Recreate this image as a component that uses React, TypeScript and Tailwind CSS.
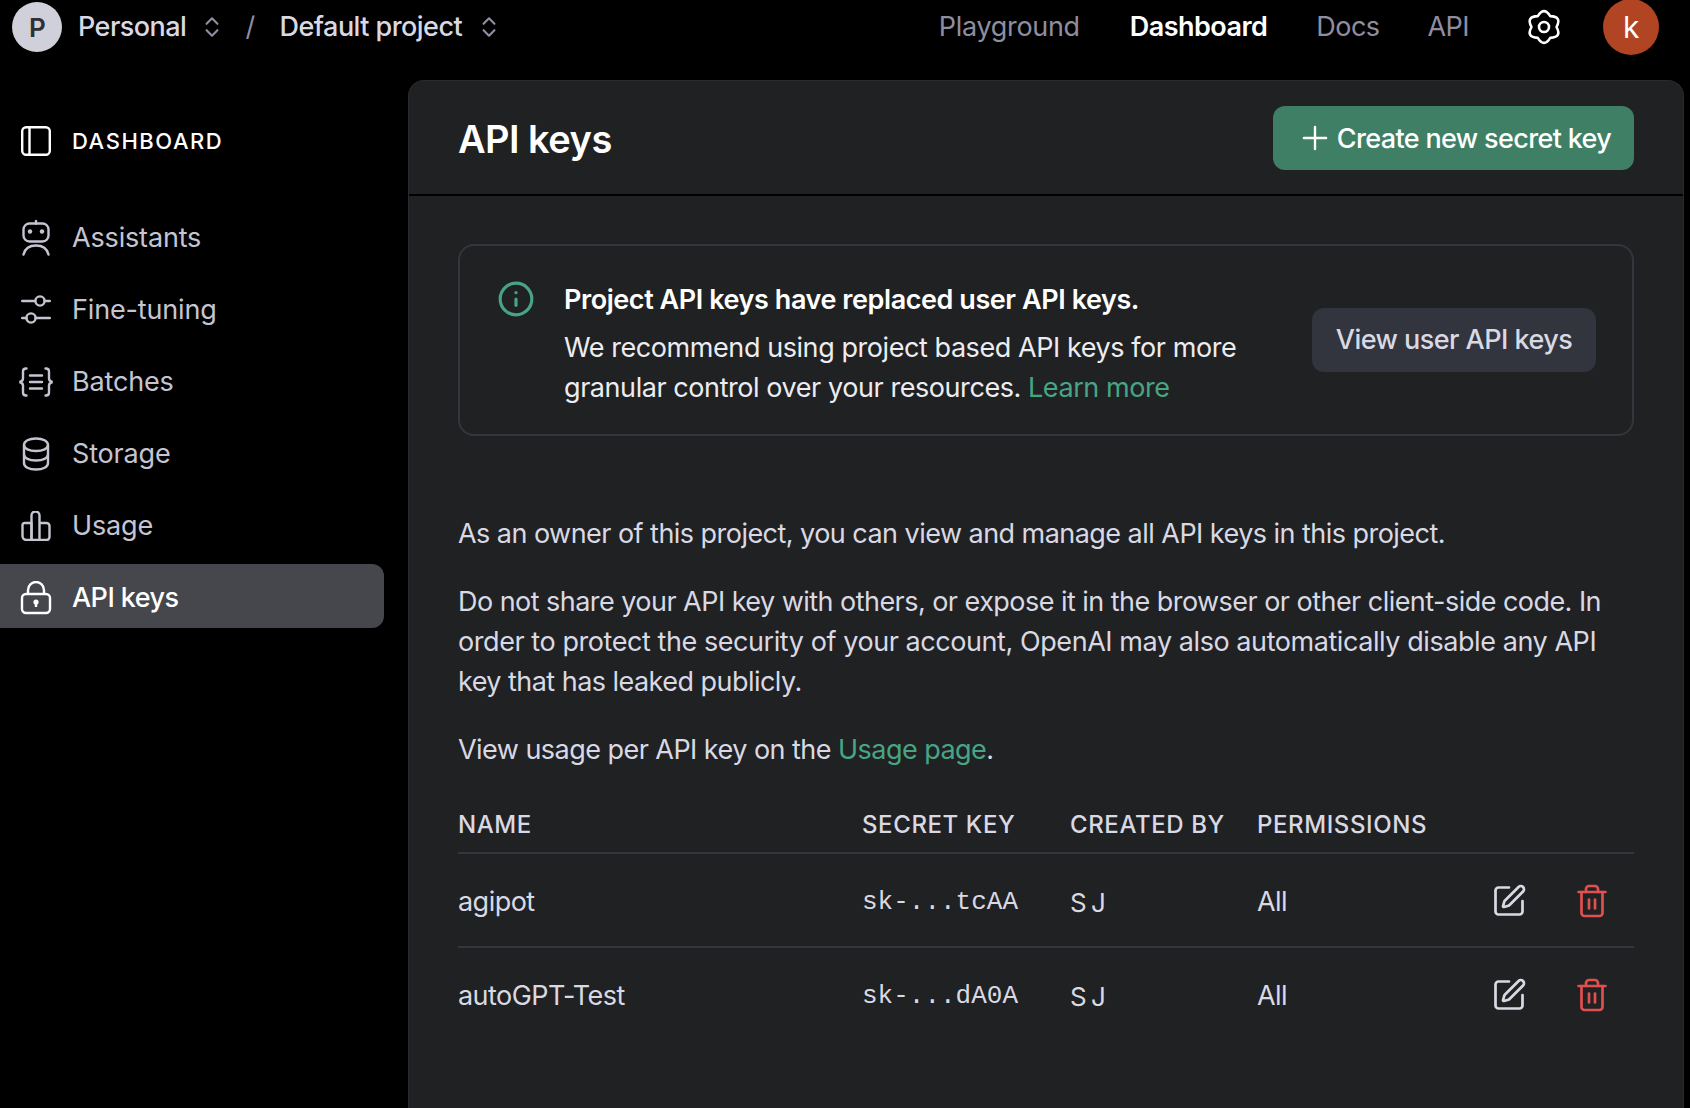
import { ChevronsUpDown, Info, Plus, SquarePen, Trash2 } from "lucide-react";
import type { ReactNode } from "react";

function PanelIcon() {
  return (
    <svg width="30" height="30" viewBox="0 0 30 30" fill="none" stroke="currentColor" strokeWidth="2.4">
      <rect x="1.2" y="1.2" width="27.6" height="27.6" rx="4" />
      <path d="M8.5 1.5v27" />
    </svg>
  );
}

function RobotIcon() {
  return (
    <svg width="28" height="36" viewBox="0 0 28 36" fill="none" stroke="currentColor" strokeWidth="2.4" strokeLinecap="round">
      <rect x="1.5" y="3.5" width="25" height="18" rx="6" />
      <path d="M14 1v2.500" />
      <circle cx="8" cy="11.500" r="2.200" fill="currentColor" stroke="none" />
      <circle cx="20" cy="11.500" r="2.200" fill="currentColor" stroke="none" />
      <path d="M1.500 34.500C3 28.500 8 25.500 14 25.500s11 3 12.500 9" />
    </svg>
  );
}

function SlidersIcon() {
  return (
    <svg width="30" height="30" viewBox="0 0 30 30" fill="none" stroke="currentColor" strokeWidth="2.4" strokeLinecap="round">
      <circle cx="19" cy="6" r="4.600" />
      <path d="M1.200 6h13M23.600 6h5.200" />
      <circle cx="10" cy="23" r="4.600" />
      <path d="M1.200 23h4.200M14.600 23h14.200" />
    </svg>
  );
}

function BracesIcon() {
  return (
    <svg width="36" height="30" viewBox="0 0 36 30" fill="none" stroke="currentColor" strokeWidth="2.4" strokeLinecap="round">
      <path d="M8.500 1.500H8C6 1.500 5 2.500 5 4.500v7c0 2-1.500 3-3.500 3.500C3.500 15.500 5 16.500 5 18.500v7c0 2 1 3 3 3h.5" />
      <path d="M27.500 1.500h.5c2 0 3 1 3 3v7c0 2 1.500 3 3.500 3.500-2 .5-3.500 1.500-3.500 3.500v7c0 2-1 3-3 3h-.5" />
      <path d="M12 8.500h12M12 15h12M12 21.500h12" />
    </svg>
  );
}

function StorageIcon() {
  return (
    <svg width="28" height="34" viewBox="0 0 28 34" fill="none" stroke="currentColor" strokeWidth="2.400">
      <path d="M2 8c0-4 5-6.500 12-6.500S26 4 26 8v18c0 4-5 6.500-12 6.500S2 30 2 26z" />
      <path d="M2 8c0 3.500 5 6 12 6s12-2.500 12-6" />
      <path d="M2 17.500c0 3.500 5 6 12 6s12-2.500 12-6" />
    </svg>
  );
}

function ChartIcon() {
  return (
    <svg width="30" height="30" viewBox="0 0 30 30" fill="none" stroke="currentColor" strokeWidth="2.4" strokeLinejoin="round">
      <path d="M3.500 12h7v17h-5a4 4 0 0 1-4-4v-11a2 2 0 0 1 2-2z" />
      <path d="M10.500 29V4.500a4 4 0 0 1 8 0V29z" />
      <path d="M18.500 12h7a3 3 0 0 1 3 3v11a3 3 0 0 1-3 3h-7" />
    </svg>
  );
}

function LockIcon() {
  return (
    <svg width="32" height="34" viewBox="0 0 32 34" fill="none" stroke="currentColor" strokeWidth="2.400">
      <path d="M8 13V9a8 8 0 0 1 16 0v4" />
      <rect x="2" y="13" width="28" height="19" rx="4" />
      <circle cx="16" cy="21" r="2.600" fill="currentColor" stroke="none" />
      <path d="M16 21v5" />
    </svg>
  );
}

function GearIcon() {
  return (
    <svg width="36" height="36" viewBox="0 0 36 36" fill="none" stroke="currentColor" strokeWidth="2.600" strokeLinejoin="round">
      <path d="M30.500 18Q36.190 7.500 24.250 7.170Q18 -3 11.750 7.170Q-.19 7.500 5.500 18Q-.19 28.500 11.750 28.830Q18 39 24.250 28.830Q36.190 28.500 30.500 18Z" />
      <circle cx="18" cy="18" r="5" />
    </svg>
  );
}

function NavItem({ icon, label, active }: { icon: ReactNode; label: string; active?: boolean }) {
  return (
    <div className={`flex h-16 items-center rounded-r-xl pl-[16px] pt-[4px] ${active ? "bg-[#46464d] font-medium text-white" : "text-[#c5c5d2]"}`}>
      <div className="flex w-[40px] shrink-0 justify-center">{icon}</div>
      <span className={`ml-[16px] ${active ? "" : "tracking-[-0.006em]"}`}>{label}</span>
    </div>
  );
}

const rows = [
  { name: "agipot", key: "sk-...tcAA" },
  { name: "autoGPT-Test", key: "sk-...dA0A" },
];

export default function App() {
  return (
    <div className="flex h-screen flex-col overflow-hidden bg-black font-['Inter',sans-serif] text-[27px] tracking-[-0.02em] text-[#d9d9e3]">
      <header className="flex h-20 shrink-0 pb-[26px] pl-3 pr-[31px]">
        <div className="flex items-center">
          <div className="flex h-[50px] w-[50px] items-center justify-center rounded-full bg-[#d0d0da] text-[26px] font-semibold text-[#2f3033]">P</div>
          <span className="ml-[16px] font-medium">Personal</span>
          <ChevronsUpDown className="ml-[13px] text-[#8e8ea0]" size={26} strokeWidth={2} />
          <span className="ml-[20px] text-[#8e8ea0]">/</span>
          <span className="ml-[25px] font-medium">Default project</span>
          <ChevronsUpDown className="ml-[14px] text-[#8e8ea0]" size={26} strokeWidth={2} />
        </div>
        <nav className="ml-auto flex items-center">
          <span className="tracking-[-0.012em] text-[#8e8ea0]">Playground</span>
          <span className="ml-[50px] font-semibold text-white">Dashboard</span>
          <span className="ml-[49px] text-[#8e8ea0]">Docs</span>
          <span className="ml-[48px] text-[#8e8ea0]">API</span>
          <div className="ml-[57px] text-white">
            <GearIcon />
          </div>
          <div className="ml-[41px] flex h-14 w-14 items-center justify-center rounded-full bg-[#b04423] text-[30px] text-white">k</div>
        </nav>
      </header>

      <div className="flex min-h-0 flex-1">
        <aside className="w-[408px] shrink-0">
          <div className="flex h-[124px] items-center pb-[2px] pl-[21px] text-white">
            <PanelIcon />
            <span className="ml-[21px] text-[22px] font-medium tracking-[0.07em]">DASHBOARD</span>
          </div>
          <div className="flex flex-col gap-2 pr-6">
            <NavItem icon={<RobotIcon />} label="Assistants" />
            <NavItem icon={<SlidersIcon />} label="Fine-tuning" />
            <NavItem icon={<BracesIcon />} label="Batches" />
            <NavItem icon={<StorageIcon />} label="Storage" />
            <NavItem icon={<ChartIcon />} label="Usage" />
            <NavItem icon={<LockIcon />} label="API keys" active />
          </div>
        </aside>

        <main className="mr-[6px] min-w-0 flex-1 rounded-t-2xl border border-b-0 border-[#2a2b30] bg-[#202123]">
          <div className="flex h-[115px] items-center justify-between border-b-2 border-black pl-[49px] pr-[49px]">
            <h1 className="pt-[4px] text-[38px] font-semibold text-white">API keys</h1>
            <button className="flex h-16 w-[361px] items-center justify-center gap-[3px] rounded-xl bg-[#3f7f65] font-medium tracking-[-0.024em] text-white">
              <Plus size={38} strokeWidth={1.500} />
              <span className="pt-[3px]">Create new secret key</span>
            </button>
          </div>

          <div className="pl-[49px] pr-[49px] pt-[48px]">
            <div className="flex h-[192px] items-center rounded-2xl border-2 border-[#35363d] pl-[37px] pr-[36px]">
              <Info className="mb-[82px] shrink-0 text-[#47a584]" size={38} strokeWidth={2} />
              <div className="ml-[29px] mt-[7px] leading-10 tracking-[-0.016em] text-[#ececf1]">
                <div className="mb-2 font-semibold text-white">Project API keys have replaced user API keys.</div>
                <div>We recommend using project based API keys for more</div>
                <div>
                  granular control over your resources. <span className="text-[#47a584]">Learn more</span>
                </div>
              </div>
              <button className="ml-auto flex h-16 w-[284px] items-center justify-center rounded-xl bg-[#32343e] font-medium tracking-[-0.02em]">View user API keys</button>
            </div>

            <div className="mt-[78px] flex flex-col gap-7 leading-10">
              <p>As an owner of this project, you can view and manage all API keys in this project.</p>
              <p>
                Do not share your API key with others, or expose it in the browser or other client-side code. In
                <br />
                <span className="tracking-[-0.016em]">order to protect the security of your account, OpenAI may also automatically disable any API</span>
                <br />
                key that has leaked publicly.
              </p>
              <p>
                View usage per API key on the <span className="text-[#47a584]">Usage page</span>.
              </p>
            </div>

            <div className="mt-[36px]">
              <div className="grid h-[48px] grid-cols-[404px_208px_187px_1fr] border-b-2 border-[#35363d] pt-[1px] text-[24px] font-medium tracking-[0.025em]">
                <span>NAME</span>
                <span>SECRET KEY</span>
                <span>CREATED BY</span>
                <span>PERMISSIONS</span>
              </div>
              {rows.map((r, i) => (
                <div key={r.name} className={`grid h-[94px] grid-cols-[404px_208px_187px_1fr] items-center ${i === 0 ? "border-b-2 border-[#35363d] pt-[5px]" : "pt-[3px]"}`}>
                  <span>{r.name}</span>
                  <span className="font-['Liberation_Mono',monospace] text-[26px] tracking-normal">{r.key}</span>
                  <span className="text-[26px] [word-spacing:-2px]">S J</span>
                  <div className="flex items-center justify-between pr-[24px]">
                    <span>All</span>
                    <div className="mb-[4px] flex items-center gap-[47px]">
                      <SquarePen size={36} strokeWidth={1.800} className="text-[#d9d9e3]" />
                      <Trash2 size={36} strokeWidth={1.800} className="text-[#e0504f]" />
                    </div>
                  </div>
                </div>
              ))}
            </div>
          </div>
        </main>
      </div>
    </div>
  );
}
